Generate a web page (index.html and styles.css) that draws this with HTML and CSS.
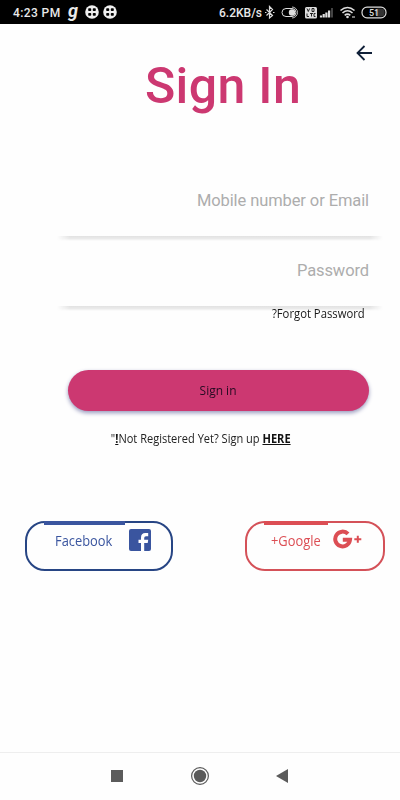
FILE: index.html
```
<!DOCTYPE html>
<html lang="en">
<head>
<meta charset="utf-8">
<title>Sign In</title>
<link rel="stylesheet" href="styles.css">
</head>
<body>
<header class="status">
  <span class="clock">4:23 PM</span>
  <span class="g-mark">g</span>
  <svg class="reel" width="14" height="14" viewBox="0 0 14 14"><circle cx="7" cy="7" r="6.8" fill="#eee"/><g fill="#000"><rect x="3.200" y="3.200" width="3" height="2.800" rx=".8"/><rect x="7.800" y="3.200" width="3" height="2.800" rx=".8"/><rect x="3.200" y="8" width="3" height="2.800" rx=".8"/><rect x="7.800" y="8" width="3" height="2.800" rx=".8"/></g></svg>
  <svg class="reel" width="14" height="14" viewBox="0 0 14 14"><circle cx="7" cy="7" r="6.8" fill="#eee"/><g fill="#000"><rect x="3.200" y="3.200" width="3" height="2.800" rx=".8"/><rect x="7.800" y="3.200" width="3" height="2.800" rx=".8"/><rect x="3.200" y="8" width="3" height="2.800" rx=".8"/><rect x="7.800" y="8" width="3" height="2.800" rx=".8"/></g></svg>
  <span class="speed">6.2KB/s</span>
  <svg class="indicators" width="126" height="24" viewBox="0 0 126 24" fill="none" stroke="#ddd">
    <path d="M2.500 9.500l6 6-3 2.500V6.500l3 3-6 6M1 12.500h1.500M9 12.500h1.500" stroke-width="1.200"/>
    <rect x="18" y="8.500" width="14" height="8" rx="4"/>
    <circle cx="28" cy="12.500" r="3.200" fill="#ddd" stroke="none"/>
    <path d="M28 7a5.500 5.500 0 0 1 0 11" stroke="#bbb"/>
    <rect x="41" y="7" width="12" height="11.500" rx="1.500" fill="#ddd" stroke="none"/>
    <path d="M43 8.500l1.300 3 1.300-3M48 8.500h2v3h-2zM43 13.500v3h2M46 13.500h3M47.500 13.500v3M51.500 13.500H50v3h1.500" stroke="#111" stroke-width=".9"/>
    <path d="M57 17.500v-2M59.700 17.500v-3.500M62.400 17.500v-5M65.100 17.500v-7" stroke-width="2.200"/><path d="M68 17.500v-9.500" stroke="#555" stroke-width="1.600"/>
    <path d="M76.500 10.500q7-6 14 0M78.500 13q5-4.500 10 0M80.700 15.300q2.800-2.500 5.600 0" stroke-width="1.600"/><circle cx="83.500" cy="17" r="1.300" fill="#ddd" stroke="none"/><path d="M88 17h3" stroke="#777" stroke-width="2"/>
    <rect x="98" y="7.200" width="24" height="10.600" rx="5" stroke-width="1.200"/><rect x="111" y="8.500" width="9.500" height="8" rx="3" fill="#333" stroke="none"/>
    <text class="battery" x="110" y="15.700" text-anchor="middle">51</text>
  </svg>
</header>
<main>
  <div class="nav"><svg width="16" height="16" viewBox="0 0 16 16" fill="none" stroke="#102038" stroke-width="1.800"><path d="M8.500 1L1.500 8l7 7M1.500 8H16"/></svg></div>
  <h1>Sign In</h1>
  <div class="field first">Mobile number or Email</div>
  <div class="field">Password</div>
  <div class="forgot"><span>?Forgot Password</span></div>
  <div class="submit"><span>Sign in</span></div>
  <div class="register"><span>"<b>!</b>Not Registered Yet? Sign up <b>HERE</b></span></div>
  <div class="social">
    <div class="provider facebook"><span class="label">Facebook</span>
      <svg width="22" height="22" viewBox="0 0 22 22"><rect width="22" height="22" rx="2" fill="#3a559f"/><path d="M12 22v-8H9.500v-3.200H12V8.700q0-4.600 4.400-4.600h2.800v3.100H17q-1.800 0-1.800 1.900v1.700h4l-.5 3.200h-3.500v8z" fill="#fff"/></svg>
    </div>
    <div class="provider google"><span class="label">+Google</span>
      <svg width="30" height="20" viewBox="0 0 30 20"><path d="M15 4.900A7.400 7.400 0 1 0 17 10.800H9.800" fill="none" stroke="#dc4e54" stroke-width="4"/><path d="M24.800 6.800v7M21.300 10.300h7" stroke="#dc4e54" stroke-width="2"/></svg>
    </div>
  </div>
</main>
<footer>
  <svg width="12" height="12"><rect width="12" height="12" fill="#5b5b5b"/></svg>
  <svg width="20" height="20"><circle cx="10" cy="10" r="8.400" fill="none" stroke="#5b5b5b" stroke-width="1.200"/><circle cx="10" cy="10" r="6.200" fill="#5b5b5b"/></svg>
  <svg width="12" height="14"><path d="M0 7L12 0V14Z" fill="#5b5b5b"/></svg>
</footer>
</body>
</html>
```

FILE: styles.css
```
* { box-sizing: border-box; }
body { margin: 0; width: 400px; height: 800px; display: flex; flex-direction: column; background: #fefefe; font-family: Roboto, sans-serif; overflow: hidden; }
svg { display: block; flex: none; }
.status { height: 24px; flex: none; display: flex; align-items: center; background: #000; color: #e8e8e8; font-size: 12px; font-weight: 500; white-space: nowrap; }
.clock { width: 48px; margin: 1px 0 0 13px; letter-spacing: .4px; }
.g-mark { width: 12px; margin: -3px 0 0 7px; font: italic bold 18px/22px Roboto, sans-serif; }
.reel { margin-left: 5px; }
.reel + .reel { margin-left: 4px; }
.speed { width: 42px; margin: 1px 0 0 102px; letter-spacing: 0; }
.indicators { margin-left: 3px; }
.battery { fill: #ddd; stroke: none; font: 500 9px Roboto, sans-serif; }
main { flex: 1; }
.nav { display: flex; justify-content: flex-end; padding: 21px 28px 0 0; height: 38px; }
h1 { margin: 0 0 0 145px; height: 98px; color: #cc3871; font-weight: 500; font-size: 50px; line-height: 48px; letter-spacing: .35px; white-space: nowrap; }
.field { position: relative; width: 326px; height: 70px; margin-left: 57px; padding: 24px 14px 0 0; color: #adadad; font-size: 16.500px; line-height: 22px; letter-spacing: -.1px; text-align: right; }
.field.first { height: 76px; padding-top: 30px; }
.field::after { content: ""; position: absolute; left: 0; right: 0; top: 100%; height: 5px; background: linear-gradient(#e2e2e2, #eaeaea 50%, #fefefe); -webkit-mask-image: linear-gradient(90deg, transparent, #000 4%, #000 96%, transparent); mask-image: linear-gradient(90deg, transparent, #000 4%, #000 96%, transparent); }
.forgot, .submit, .register, .label { font-family: "Open Sans", sans-serif; white-space: nowrap; }
.forgot { position: relative; z-index: 1; height: 64px; padding-right: 35px; text-align: right; color: #181818; font-size: 12px; line-height: 15px; }
.forgot span { display: inline-block; transform: scaleX(.94); transform-origin: right; }
.submit { width: 301px; height: 41px; margin-left: 68px; border-radius: 21px; background: #cc3871; box-shadow: 0 2px 4px #9799bd; text-align: center; color: #250b22; font-size: 13px; line-height: 41px; }
.submit span, .register > span { display: inline-block; transform: scaleX(.92); }
.register { height: 110px; padding: 18px 0 0 1px; text-align: center; font-size: 12px; line-height: 20px; color: #222; }
.register b { text-decoration: underline; color: #111; }
.social { display: flex; justify-content: space-between; padding: 0 15px 0 25px; }
.provider { position: relative; display: flex; height: 50px; border: 2px solid #274584; border-radius: 20px; color: #3a559f; }
.provider::before { content: ""; position: absolute; top: -2px; left: 17px; width: 81px; height: 4px; background: #3a559f; }
.facebook { width: 148px; padding: 6px 0 0 28px; }
.google { width: 140px; padding: 6px 0 0 24px; color: #dc4e54; border-color: #d45158; }
.google::before { width: 64px; background: #dc4e54; }
.label { width: 58px; font-size: 14px; line-height: 23px; transform: scaleX(.92); transform-origin: left; }
.facebook svg { margin-left: 16px; }
.google svg { margin: 0 0 0 4px; }
footer { flex: none; height: 48px; display: flex; justify-content: space-between; align-items: center; padding: 0 112px 2px 111px; border-top: 1px solid #eee; }
```
